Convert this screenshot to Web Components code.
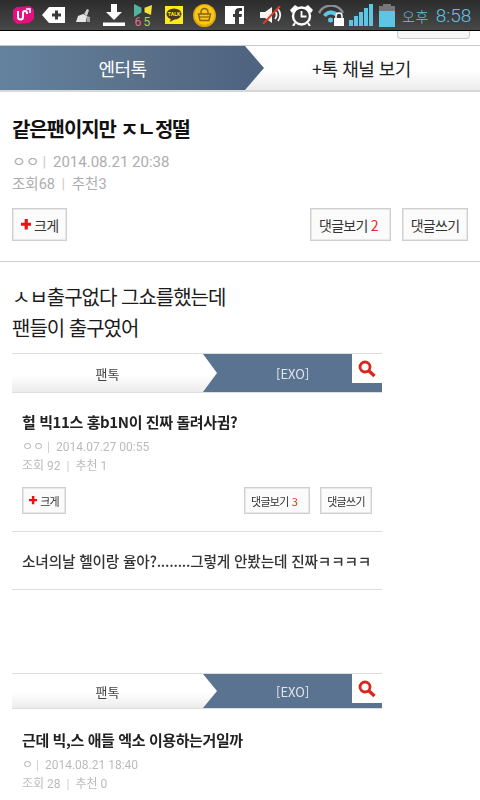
<!DOCTYPE html>
<html lang="ko">
<head>
<meta charset="utf-8">
<title>엔터톡</title>
<style>
    html, body { margin: 0; padding: 0; background: #fff; }
    body {
        width: 480px;
        height: 800px;
        overflow: hidden;
        font-family: "Noto Sans CJK KR", "Roboto", sans-serif;
    }
</style>
</head>
<body>
<status-bar></status-bar>
<top-strip></top-strip>
<talk-tabs left="엔터톡" right="+톡 채널 보기" active="left"></talk-tabs>
<post-head title-text="같은팬이지만 ㅈㄴ정떨" author="ㅇㅇ" date="2014.08.21 20:38" views="68" likes="3" replies="2"></post-head>
<post-body>
    <div>ㅅㅂ출구없다 그쇼를했는데</div>
    <div>팬들이 출구였어</div>
</post-body>
<shot-frame style="--shot-height:237px; margin-bottom:83px">
    <talk-tabs small left="팬톡" right="[EXO]" active="right"></talk-tabs>
    <post-head small title-text="헐 빅11스 홍b1N이 진짜 돌려사귐?" author="ㅇㅇ" date="2014.07.27 00:55" views=" 92" likes=" 1" replies="3"></post-head>
    <next-row>소녀의날 헬이랑 율아?........그렇게 안봤는데 진짜ㅋㅋㅋㅋ</next-row>
</shot-frame>
<shot-frame style="--shot-height:127px">
    <talk-tabs small left="팬톡" right="[EXO]" active="right" style="height:36px"></talk-tabs>
    <post-head small title-text="근데 빅,스 애들 엑소 이용하는거일까" author="ㅇ" date="2014.08.21 18:40" views=" 28" likes=" 0" style="padding-top:20px"></post-head>
</shot-frame>

<script>
class StatusBar extends HTMLElement {
    constructor() {
        super();
        this.attachShadow({mode: 'open'}).innerHTML = `
            <style>
                :host {
                    display: flex;
                    align-items: center;
                    box-sizing: border-box;
                    height: 31px;
                    padding: 0 0 0 13px;
                    background: linear-gradient(#2c2c2c, #484848);
                    border-bottom: 1px solid #050505;
                    overflow: hidden;
                }
                svg { display: block; flex: none; }
                .clock {
                    margin-left: 7px;
                    color: #5cc6e4;
                    font: 300 19px "Roboto", "Noto Sans CJK KR", sans-serif;
                    white-space: nowrap;
                }
                .clock small { font-size: 14px; margin-right: 7px; letter-spacing: .5px; }
                text { font-family: "Roboto", sans-serif; }
            </style>

            <svg style="margin-right:8px" width="21" height="18" viewBox="0 0 21 18">
                <path d="M4 1l13-1 4 4v9l-5 4-12 1-4-4V4z" fill="#e5107f"/>
                <path d="M5 5v6a2.500 2.500 0 0 0 5 0V7a2 2 0 0 1 4 0v1" fill="none" stroke="#fff" stroke-width="2"/>
                <path d="M13 3h4v4" fill="none" stroke="#fff" stroke-width="1.600"/>
            </svg>

            <svg style="margin-right:11px" width="23" height="16" viewBox="0 0 23 16">
                <path fill-rule="evenodd" fill="#fff" d="M7 0h16v16H7L0 8zM10 6.500v3h3v3h3v-3h3v-3h-3v-3h-3v3z"/>
            </svg>

            <svg style="margin-right:12px" width="15" height="15" viewBox="0 0 15 15">
                <path d="M0 14l2-6 5-2 4 2-1 6z" fill="#e6e6e6"/>
                <path d="M8 6l3-5 2 1-2 6z" fill="#cfcfcf"/>
                <path d="M11 14V8l3 1v5z" fill="#a2a2a2"/>
            </svg>

            <svg style="margin-right:8px" width="22" height="22" viewBox="0 0 22 22">
                <path d="M8 0h6v8h5l-8 8-8-8h5z" fill="#fff"/>
                <rect x="0" y="18.500" width="22" height="3.500" fill="#fff"/>
            </svg>

            <svg style="margin-right:12px" width="20" height="22" viewBox="0 0 20 22">
                <path d="M1 0l8 4v4l-8 5z" fill="#4fb39f"/>
                <path d="M19 1l-8 3v4l7 3z" fill="#f3e23e"/>
                <rect x="8.500" y="4" width="3" height="4" fill="#2b2b2b"/>
                <text x="1.500" y="21.500" font-size="12" fill="#e8708a">6</text>
                <text x="10.500" y="21.500" font-size="12" fill="#a9d45a">5</text>
            </svg>

            <svg style="margin-right:10px" width="18" height="18" viewBox="0 0 18 18">
                <rect width="18" height="18" fill="#fdea18"/>
                <ellipse cx="9" cy="8" rx="7.500" ry="5.500" fill="#4a3728"/>
                <path d="M6 12l-1 4 5-3z" fill="#4a3728"/>
                <text x="9" y="9.800" font-size="5.200" font-weight="700" text-anchor="middle" fill="#fdea18">TALK</text>
            </svg>

            <svg style="margin-right:9px" width="23" height="23" viewBox="0 0 23 23">
                <circle cx="11.500" cy="11.500" r="11.500" fill="#e0a50c"/>
                <circle cx="11.500" cy="11" r="10" fill="#f7c815"/>
                <path d="M8 10V8a3.500 3.500 0 0 1 7 0v2" fill="none" stroke="#8a5f10" stroke-width="1.400"/>
                <path d="M5.500 10h12l-1.500 6.500H7z" fill="none" stroke="#8a5f10" stroke-width="1.400"/>
                <path d="M6.500 13h10" stroke="#8a5f10" stroke-width="1.200"/>
            </svg>

            <svg style="margin-right:16px" width="19" height="18" viewBox="0 0 19 18">
                <path fill="#fff" d="M0 0h19v18h-5v-7h2.500l.5-3h-3V6.500C14 5.500 14.500 5 15.500 5H17V2h-2.500C11.500 2 10 3.500 10 6v2H8v3h2v7H0z"/>
            </svg>

            <svg style="margin-right:7px" width="23" height="18" viewBox="0 0 23 18">
                <path d="M0 6h5l7-5v16l-7-5H0z" fill="#f4f4f4"/>
                <path d="M15 5c2 2.500 2 5.500 0 8M18 3c3 4 3 8 0 12" fill="none" stroke="#f4f4f4" stroke-width="1.800"/>
                <path d="M3 18L20 0" stroke="#e33b22" stroke-width="2"/>
            </svg>

            <svg style="margin-right:5px" width="23" height="22" viewBox="0 0 23 22">
                <circle cx="11.500" cy="12" r="8.500" fill="none" stroke="#fff" stroke-width="2.400"/>
                <path d="M11.500 7v5.500h5" fill="none" stroke="#fff" stroke-width="1.800"/>
                <path d="M0 6l5-5 3 2-6 6zM23 6l-5-5-3 2 6 6z" fill="#fff"/>
                <path d="M5 19l-2 3M18 19l2 3" stroke="#fff" stroke-width="2"/>
            </svg>

            <svg style="margin-right:4px" width="27" height="21" viewBox="0 0 27 21">
                <path d="M0 7a15 15 0 0 1 26 0l-2 2a12 12 0 0 0-22 0z" fill="#8a8f92"/>
                <path d="M5 10a10 10 0 0 1 15-2l-3 3a6 6 0 0 0-9 1z" fill="#5cc6e4"/>
                <circle cx="12.500" cy="15" r="2.500" fill="#5cc6e4"/>
                <rect x="16" y="13" width="10" height="8" fill="#fff"/>
                <path d="M18 13v-2a3 3 0 0 1 6 0v2" fill="none" stroke="#fff" stroke-width="1.500"/>
            </svg>

            <svg style="margin-right:6px" width="24" height="22" viewBox="0 0 24 22">
                <g fill="#5cc6e4">
                    <rect x="0" y="16" width="4" height="6"/>
                    <rect x="5" y="12" width="4" height="10"/>
                    <rect x="10" y="8" width="4" height="14"/>
                    <rect x="15" y="4" width="4" height="18"/>
                    <rect x="20" y="0" width="4" height="22"/>
                </g>
            </svg>

            <svg width="16" height="23" viewBox="0 0 16 23">
                <rect x="4" y="0" width="8" height="3" fill="#777"/>
                <rect x="0" y="2" width="16" height="6" fill="#777"/>
                <rect x="0" y="7" width="16" height="16" fill="#5cc6e4"/>
            </svg>

            <span class="clock"><small>오후</small>8:58</span>
        `;
    }
}

class TopStrip extends HTMLElement {
    constructor() {
        super();
        this.attachShadow({mode: 'open'}).innerHTML = `
            <style>
                :host {
                    display: flex;
                    justify-content: flex-end;
                    box-sizing: border-box;
                    height: 15px;
                    padding-right: 10px;
                    background: #fff;
                    border-bottom: 1px solid #c9c9c9;
                }
                div {
                    width: 71px;
                    height: 7px;
                    border: 1px solid #c8c8c8;
                    border-top: 0;
                    border-radius: 0 0 4px 4px;
                    background: #f6f6f6;
                }
            </style>
            <div></div>
        `;
    }
}

class TalkTabs extends HTMLElement {
    constructor() {
        super();
        const left = this.getAttribute('left');
        const right = this.getAttribute('right');
        const activeLeft = this.getAttribute('active') === 'left';
        this.attachShadow({mode: 'open'}).innerHTML = `
            <style>
                :host {
                    display: flex;
                    position: relative;
                    box-sizing: border-box;
                    height: 46px;
                    border-bottom: 2px solid #d8d8d8;
                    background: linear-gradient(#fff 55%, #ececec);
                    color: #222;
                    font-size: 18px;
                    letter-spacing: -.5px;
                }
                :host([small]) {
                    height: 40px;
                    border-top: 1px solid #ddd;
                    border-bottom: 1px solid #ddd;
                    font-size: 13px;
                    color: #444;
                    letter-spacing: 0;
                }
                .side {
                    box-sizing: border-box;
                    display: flex;
                    align-items: center;
                    justify-content: center;
                    white-space: nowrap;
                }
                .l { width: 245px; }
                .r { flex: 1; padding-right: 2px; }
                :host([small]) .l { width: 191px; }
                .on { color: #fff; }
                .blue {
                    background: linear-gradient(90deg, #64829f, #5a7089 60%, #4e6480);
                }
                .arrow { display: block; flex: none; width: 19px; height: 100%; margin-right: -19px; position: relative; z-index: 1; }
                .notch { flex: none; display: block; width: 14px; height: 100%; }
                .shot-blue {
                    flex: 1;
                    background: #5a7390;
                    justify-content: flex-start;
                    color: #dfe6ee;
                    padding-left: 59px;
                }
                .search {
                    position: absolute;
                    top: 0;
                    right: 0;
                    width: 30px;
                    height: 29px;
                    background: #fff;
                    display: flex;
                    align-items: center;
                    justify-content: center;
                }
            </style>
            ${activeLeft ? `
                <div class="side l on blue">${left}</div>
                <svg class="arrow" viewBox="0 0 19 44" preserveAspectRatio="none"><path d="M0 0L19 22 0 44z" fill="#4e6480"/></svg>
                <div class="side r">${right}</div>
            ` : `
                <div class="side l">${left}</div>
                <svg class="notch" viewBox="0 0 14 38" preserveAspectRatio="none"><path d="M0 0L14 19 0 38h14V0z" fill="#5a7390"/></svg>
                <div class="side shot-blue">${right}</div>
                <div class="search">
                    <svg width="18" height="18" viewBox="0 0 18 18"><circle cx="7" cy="7" r="5" fill="none" stroke="#d8271c" stroke-width="2.800"/><path d="M11 11l5.500 5" stroke="#d8271c" stroke-width="3.400"/></svg>
                </div>
            `}
        `;
    }
}

class PostHead extends HTMLElement {
    constructor() {
        super();
        const a = name => this.getAttribute(name);
        const replies = a('replies');
        this.attachShadow({mode: 'open'}).innerHTML = `
            <style>
                :host {
                    display: block;
                    box-sizing: border-box;
                    height: 170px;
                    padding: 22px 12px 0;
                    border-bottom: 1px solid #d2d2d2;
                    background: #fff;
                    --btn-h: 33px;
                }
                :host([small]) {
                    height: 139px;
                    padding: 18px 10px 0;
                    border-bottom: 1px solid #ddd;
                    --btn-h: 27px;
                }
                h1 {
                    margin: 0;
                    font-size: 20px;
                    line-height: 29px;
                    font-weight: 700;
                    color: #111;
                    letter-spacing: -1.100px;
                    white-space: nowrap;
                }
                :host([small]) h1 { font-size: 15px; line-height: 22px; letter-spacing: -.4px; color: #222; }
                .meta {
                    margin-top: 8px;
                    font-family: "Roboto", "Noto Sans CJK KR", sans-serif;
                    font-size: 15px;
                    line-height: 23px;
                    color: #adadad;
                    white-space: pre;
                }
                .meta + .meta { margin-top: -1px; font-size: 14.500px; }
                :host([small]) .meta { margin-top: 5px; font-size: 12px; line-height: 19px; color: #bbb; }
                :host([small]) .meta + .meta { margin-top: 0; font-size: 12px; }
                .bar { margin: 0 3px; color: #ccc; }
                .btns {
                    display: flex;
                    gap: 11px;
                    margin-top: 12px;
                    font-size: 14px;
                }
                :host([small]) .btns { gap: 10px; margin-top: 11px; font-size: 11px; }
                .btn {
                    box-sizing: border-box;
                    display: flex;
                    align-items: center;
                    justify-content: center;
                    flex: none;
                    height: var(--btn-h);
                    border: 1px solid #cfcfcf;
                    box-shadow: inset 0 0 0 1px #e8e8e8;
                    background: #fbfbfb;
                    color: #333;
                    letter-spacing: -.7px;
                    white-space: nowrap;
                }
                .big { width: 55px; }
                .more { margin-left: auto; width: 81px; justify-content: flex-start; padding-left: 8px; }
                .write { width: 66px; }
                :host([small]) .big { width: 44px; }
                :host([small]) .more { width: 66px; padding-left: 6px; }
                :host([small]) .write { width: 52px; }
                .plus { display: block; width: .75em; height: .75em; margin-right: 3px; }
                .num { color: #f02a1c; margin-left: 3px; letter-spacing: 0; }
            </style>
            <h1>${a('title-text')}</h1>
            <div class="meta">${a('author')}<span class="bar">|</span> ${a('date')}</div>
            <div class="meta">조회${a('views')} <span class="bar">|</span> 추천${a('likes')}</div>
            ${replies ? `
            <div class="btns">
                <div class="btn big">
                    <svg class="plus" viewBox="0 0 10 10"><path d="M5 0v10M0 5h10" stroke="#ee0f0f" stroke-width="3"/></svg>크게
                </div>
                <div class="btn more">댓글보기<span class="num">${replies}</span></div>
                <div class="btn write">댓글쓰기</div>
            </div>` : ''}
        `;
    }
}

class PostBody extends HTMLElement {
    constructor() {
        super();
        this.attachShadow({mode: 'open'}).innerHTML = `
            <style>
                :host {
                    display: block;
                    padding: 19px 12px 10px;
                    font-size: 20px;
                    line-height: 31px;
                    color: #1c1c1c;
                    letter-spacing: -1px;
                }
            </style>
            <slot></slot>
        `;
    }
}

class ShotFrame extends HTMLElement {
    constructor() {
        super();
        this.attachShadow({mode: 'open'}).innerHTML = `
            <style>
                :host {
                    display: block;
                    width: 370px;
                    height: var(--shot-height);
                    margin-left: 12px;
                    overflow: hidden;
                    filter: blur(.5px);
                    background: #fff;
                }
            </style>
            <slot></slot>
        `;
    }
}

class NextRow extends HTMLElement {
    constructor() {
        super();
        this.attachShadow({mode: 'open'}).innerHTML = `
            <style>
                :host {
                    display: flex;
                    align-items: center;
                    box-sizing: border-box;
                    height: 58px;
                    padding: 0 10px;
                    border-bottom: 1px solid #ddd;
                    font-size: 14.700px;
                    font-weight: 500;
                    color: #333;
                    letter-spacing: -.2px;
                    white-space: nowrap;
                }
            </style>
            <slot></slot>
        `;
    }
}

customElements.define('status-bar', StatusBar);
customElements.define('top-strip', TopStrip);
customElements.define('talk-tabs', TalkTabs);
customElements.define('post-head', PostHead);
customElements.define('post-body', PostBody);
customElements.define('shot-frame', ShotFrame);
customElements.define('next-row', NextRow);
</script>
</body>
</html>
